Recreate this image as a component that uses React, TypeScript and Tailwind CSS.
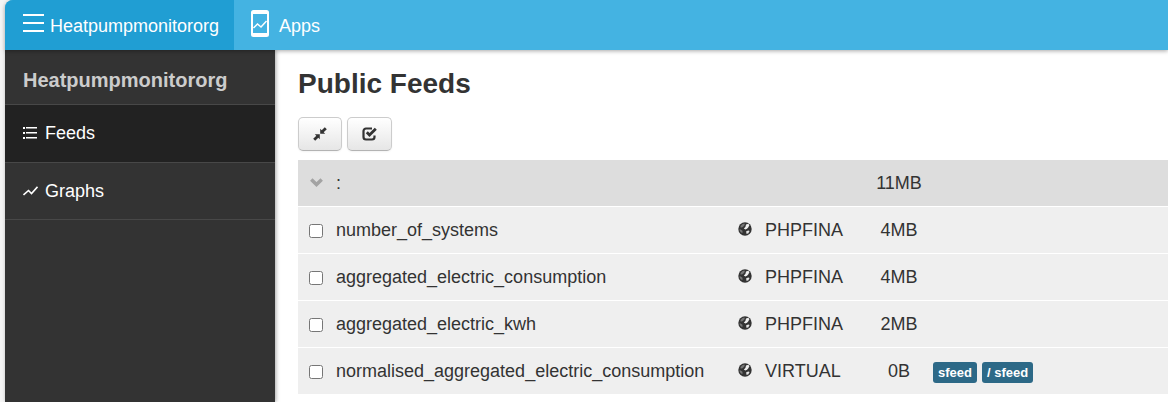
import React, { useState } from 'react';

interface Feed {
  id: number;
  name: string;
  engine: string;
  size: string;
  processes: string[];
}

const feeds: Feed[] = [
  { id: 1, name: 'number_of_systems', engine: 'PHPFINA', size: '4MB', processes: [] },
  { id: 2, name: 'aggregated_electric_consumption', engine: 'PHPFINA', size: '4MB', processes: [] },
  { id: 3, name: 'aggregated_electric_kwh', engine: 'PHPFINA', size: '2MB', processes: [] },
  { id: 4, name: 'normalised_aggregated_electric_consumption', engine: 'VIRTUAL', size: '0B', processes: ['sfeed', '/ sfeed'] },
];

const GlobeIcon = () => (
  <svg width="14" height="14" viewBox="0 0 14 14" className="mb-0.5 block">
    <circle cx="7" cy="7" r="6.7" fill="#333" />
    <path d="M6.600 1.400 4.600 2 3 3.400 2.200 5.200 4 5.600 5.400 4.600 6.600 3z" fill="#777" />
    <path d="M8 2.600 10.400 1.800 11.400 3.200 10.200 5.400 9 6.800 7.400 7.600 5.800 6.400 7.400 5z" fill="#efefef" />
    <path d="M8.200 9.200 10.400 8.400 11.600 9 10.200 11.400 8.400 11.800z" fill="#e4e4e4" />
    <path d="M1.600 7 4.200 8.600 4.800 10.600 3.400 10.800 1.800 9z" fill="#777" />
  </svg>
);

const Header: React.FC = () => (
  <header className="relative z-10 flex h-[50px] rounded-tl-lg bg-[#44b3e2] text-lg text-white shadow-[0_1px_4px_rgba(0,0,0,0.35)]">
    <button className="flex items-center gap-1.5 rounded-tl-lg bg-[#209ed3] pt-0.5 pr-[15px] pl-[18px]">
      <svg width="21" height="18" viewBox="0 0 21 18" fill="#fff" className="mb-1.5">
        <path d="M0 0h21v2H0zM0 8h21v2H0zM0 16h21v2H0z" />
      </svg>
      Heatpumpmonitororg
    </button>
    <a href="#apps" className="flex items-center gap-2.5 px-[17px] pt-0.5">
      <svg width="18" height="27" viewBox="0 0 18 27" className="mb-1.5">
        <path
          fillRule="evenodd"
          fill="#fff"
          d="M2.500 0h13A2.500 2.500 0 0 1 18 2.500v22a2.500 2.500 0 0 1-2.500 2.500h-13A2.500 2.500 0 0 1 0 24.500v-22A2.500 2.500 0 0 1 2.500 0zM2 4v19h14V4z"
        />
        <path d="M2.500 18 6.500 14l3.500 3 5.500-6" fill="none" stroke="#fff" strokeWidth="1.500" />
      </svg>
      Apps
    </a>
  </header>
);

const Sidebar: React.FC = () => (
  <nav className="w-[270px] shrink-0 bg-[#333] shadow-[1px_0_4px_rgba(0,0,0,0.35)]">
    <h2 className="flex h-[55px] items-center border-b border-[#484848] pt-1.5 pl-[18px] text-xl font-bold text-[#ccc]">
      Heatpumpmonitororg
    </h2>
    <a href="#feeds" className="flex h-[58px] items-center gap-2 border-b border-[#484848] bg-[#222] pb-0.5 pl-[18px] text-lg text-white">
      <svg width="14" height="12" viewBox="0 0 14 12" fill="#fff">
        <path d="M0 0h2v2H0zM3 0h11v1.500H3zM0 5h2v2H0zM3 5h11v1.500H3zM0 10h2v2H0zM3 10h11v1.500H3z" />
      </svg>
      Feeds
    </a>
    <a href="#graphs" className="flex h-[57px] items-center gap-2 border-b border-[#484848] pl-[18px] text-lg text-white">
      <svg width="15" height="10" viewBox="0 0 15 10" fill="none" stroke="#fff" strokeWidth="1.600" className="-mr-px">
        <path d="M.5 9 5.500 4.500l3 3L14.500.800" />
      </svg>
      Graphs
    </a>
  </nav>
);

interface ToolButtonProps {
  label: string;
  onClick: () => void;
  children: React.ReactNode;
}

const ToolButton: React.FC<ToolButtonProps> = ({ label, onClick, children }) => (
  <button
    aria-label={label}
    onClick={onClick}
    className="flex h-[34px] items-center justify-center rounded-[5px] border border-[#ccc] border-b-[#b3b3b3] bg-gradient-to-b from-white to-[#e6e6e6] px-3.5 shadow-[0_1px_2px_rgba(0,0,0,0.05)]"
  >
    {children}
  </button>
);

const App: React.FC = () => {
  const [open, setOpen] = useState(true);
  const [selected, setSelected] = useState<number[]>([]);

  const toggle = (id: number) =>
    setSelected(selected.includes(id) ? selected.filter((s) => s !== id) : [...selected, id]);

  const toggleAll = () => setSelected(selected.length === feeds.length ? [] : feeds.map((f) => f.id));

  return (
    <div className="min-h-screen bg-[#f5f5f5] pl-[5px] font-['Liberation_Sans',Arial,sans-serif] text-[#333]">
      <div className="flex min-h-screen flex-col">
        <Header />
        <div className="flex flex-1 bg-white">
          <Sidebar />
          <main className="min-w-0 flex-1 pl-[23px]">
            <h1 className="pt-4 text-[28px] leading-9 font-bold">Public Feeds</h1>

            <div className="mt-[15px] flex gap-[5px]">
              <ToolButton label="Collapse" onClick={() => setOpen(!open)}>
                <svg width="14" height="14" viewBox="0 0 14 14" fill="#333">
                  <path d="M7.200 1.800v5h5L10.700 5.300 13.800 2.200 11.800.200 8.700 3.300z" />
                  <path d="M6.800 12.200v-5h-5L3.300 8.700.200 11.800l2 2 3.100-3.100z" />
                </svg>
              </ToolButton>
              <ToolButton label="Select all" onClick={toggleAll}>
                <svg width="15" height="14" viewBox="0 0 15 14" fill="none" stroke="#333" strokeWidth="2.200">
                  <path d="M10 1.500H4A2.500 2.500 0 0 0 1.500 4v6A2.500 2.500 0 0 0 4 12.500h6a2.500 2.500 0 0 0 2.500-2.500V8.500" />
                  <path d="M4.800 5.200 7.500 8l6.300-6.300" strokeWidth="2.800" />
                </svg>
              </ToolButton>
            </div>

            <table className="mt-[9px] w-full table-fixed border-collapse text-left text-lg">
              <colgroup>
                <col className="w-[38px]" />
                <col className="w-[402px]" />
                <col className="w-[27px]" />
                <col className="w-[100px]" />
                <col className="w-[68px]" />
                <col />
              </colgroup>
              <thead>
                <tr className="h-[46px] border-b border-white bg-[#ddd]">
                  <th className="pl-3">
                    <button aria-label="Toggle group" onClick={() => setOpen(!open)} className="block">
                      <svg width="13" height="9" viewBox="0 0 13 9" fill="none" stroke="#a3a3a3" strokeWidth="3.500">
                        <path d="M1.300 1.500 6.500 6.500l5.200-5" />
                      </svg>
                    </button>
                  </th>
                  <th className="font-normal">:</th>
                  <th />
                  <th />
                  <th className="text-center font-normal">11MB</th>
                  <th />
                </tr>
              </thead>
              <tbody>
                {open &&
                  feeds.map((feed) => (
                    <tr key={feed.id} className="h-[47px] border-b border-white bg-[#efefef]">
                      <td className="pl-[11px]">
                        <input
                          id={`feed-${feed.id}`}
                          type="checkbox"
                          checked={selected.includes(feed.id)}
                          onChange={() => toggle(feed.id)}
                          className="mt-0.5 block size-3.5"
                        />
                      </td>
                      <td>
                        <label htmlFor={`feed-${feed.id}`}>{feed.name}</label>
                      </td>
                      <td>
                        <GlobeIcon />
                      </td>
                      <td>{feed.engine}</td>
                      <td className="text-center">{feed.size}</td>
                      <td>
                        <div className="flex gap-[5px] pt-1">
                          {feed.processes.map((process) => (
                            <span key={process} className="rounded-[3px] bg-[#2d6987] px-[5px] py-0.5 text-[13px] leading-[17px] font-bold text-white">
                              {process}
                            </span>
                          ))}
                        </div>
                      </td>
                    </tr>
                  ))}
              </tbody>
            </table>
          </main>
        </div>
      </div>
    </div>
  );
};

export default App;
